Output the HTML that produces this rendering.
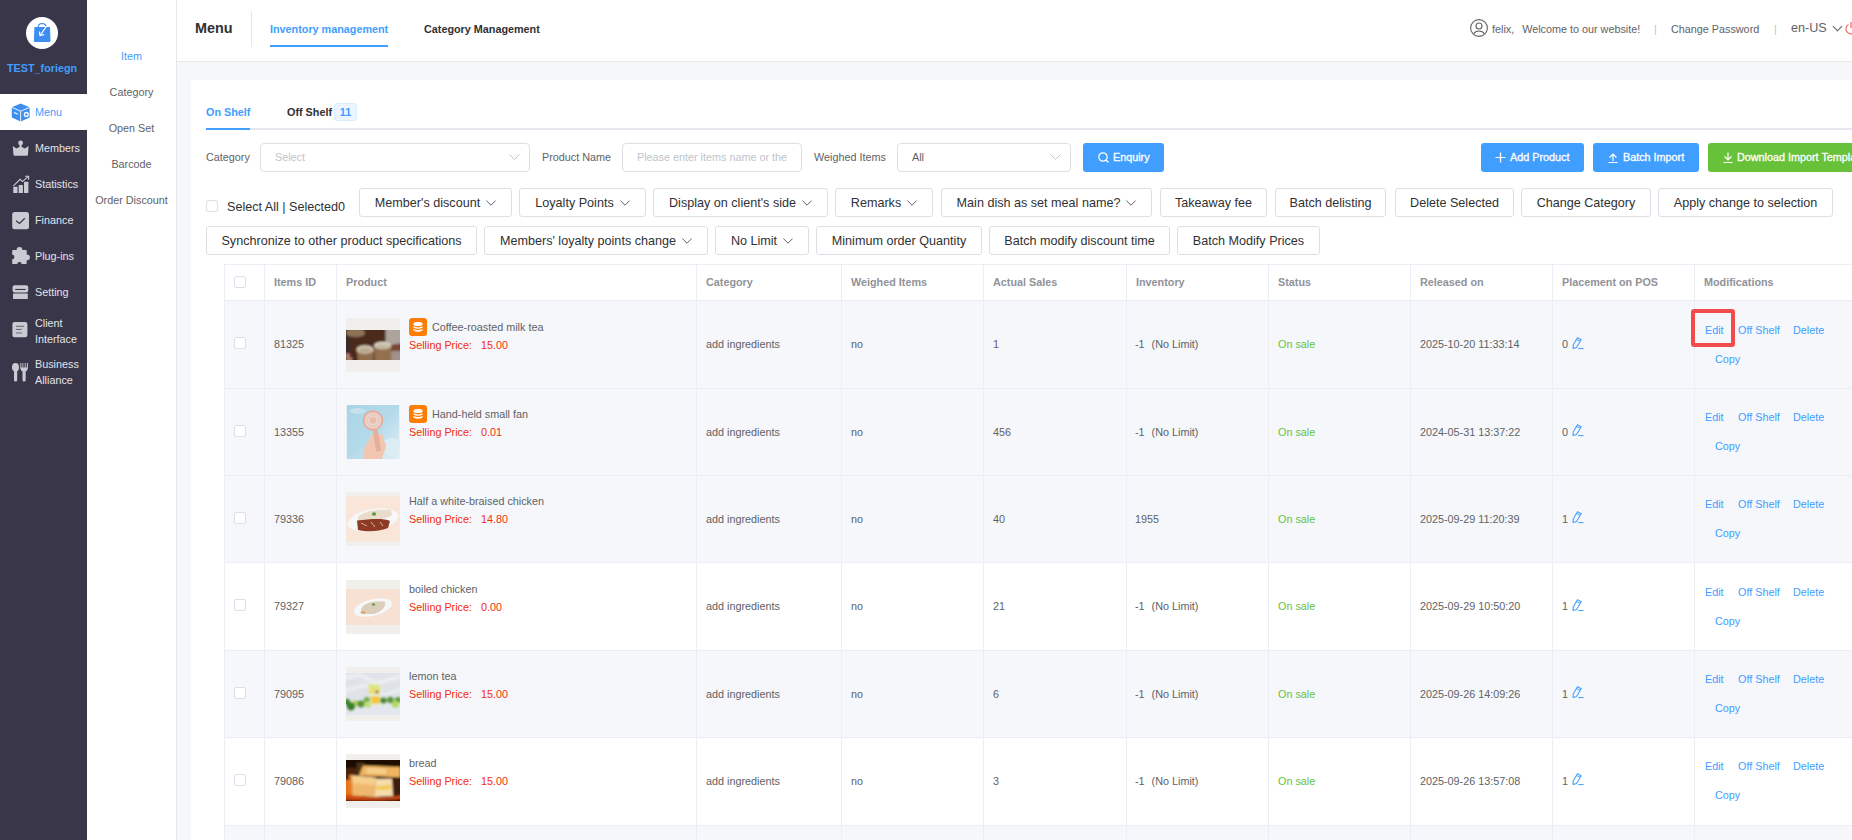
<!DOCTYPE html>
<html><head><meta charset="utf-8">
<style>
*{box-sizing:border-box;margin:0;padding:0}
html,body{width:1852px;height:840px;overflow:hidden}
body{position:relative;background:#f5f7fa;font-family:"Liberation Sans",sans-serif;font-size:10.8px;color:#606266}
.a{position:absolute;white-space:nowrap}
#sb{left:0;top:0;width:87px;height:840px;background:#3a3649}
#sb2{left:87px;top:0;width:90px;height:840px;background:#fff;border-right:1px solid #e6e6e6}
#hd{left:177px;top:0;width:1675px;height:62px;background:#fff;border-bottom:1px solid #e8e8e8}
#card{left:191px;top:80px;width:1700px;height:800px;background:#fff}
.nav{left:0;width:87px;height:36px;color:#e2e3e8}
.nav .t{position:absolute;left:35px;top:0;line-height:36px}
.nav svg{position:absolute;left:11px;top:9px}
.sub{left:87px;width:89px;text-align:center;line-height:20px;color:#606266}
.btn{position:absolute;height:29px;border:1px solid #dcdfe6;border-radius:3px;background:#fff;color:#303133;font-size:12.6px;line-height:28px;text-align:center;white-space:nowrap}
.chv{display:inline-block;margin-left:6px;vertical-align:top;margin-top:11px}
.inp{position:absolute;height:29px;border:1px solid #dcdfe6;border-radius:4px;background:#fff;line-height:27px;padding-left:14px;color:#c0c4cc;white-space:nowrap;overflow:hidden}
.chv2{position:absolute;right:9px;top:10px}
.lbl{position:absolute;line-height:29px;color:#606266;white-space:nowrap}
.pb{position:absolute;top:143px;height:29px;border-radius:3px;color:#fff;line-height:29px;white-space:nowrap;-webkit-text-stroke:0.3px #fff;overflow:hidden}
.hl{left:224px;width:1628px;height:1px;background:#ebeef5}
.vl{top:264px;width:1px;height:576px;background:#ebeef5}
.cb{width:12px;height:12px;border:1px solid #dcdfe6;border-radius:2px;background:#fff}
.td{width:12px;height:12px}
.th{top:264px;line-height:36px;font-weight:bold;color:#909399}
.tc{line-height:87px;height:87px}
.pimg{width:54px;height:54px;background:#f0efed;overflow:hidden}
.pn{line-height:16px}
.pp{line-height:16px;color:#f22e0c}
.coin{width:18px;height:18px;border-radius:3px;background:#ff7d00}
.coin svg{display:block}
.lk{line-height:16px;color:#409eff}
</style></head><body>

<!-- left dark sidebar -->
<div id="sb" class="a">
  <div class="a" style="left:26px;top:17px;width:32px;height:32px;border-radius:50%;background:#fff"></div>
  <svg class="a" style="left:33px;top:23px" width="19" height="20" viewBox="0 0 19 20"><path d="M1.4 4.3 Q1.4 3.9 1.9 3.9 H16.5 Q17 3.9 17 4.3 L17.5 18.1 Q17.5 18.9 16.8 18.9 H1.6 Q0.9 18.9 0.9 18.1 Z" fill="#3d8ef0"/><path d="M5.3 4 Q5.3 0.7 9.2 0.5 Q12.6 0.7 13.2 3.3" fill="none" stroke="#3d8ef0" stroke-width="1.2"/><path d="M13.4 3.4 L7.4 12" fill="none" stroke="#fff" stroke-width="1.2"/><path d="M6.4 8.6 L7 12.5 L11.2 11.6" fill="none" stroke="#fff" stroke-width="1.2"/></svg>
  <div class="a" style="left:7px;top:60px;font-weight:bold;color:#409eff;line-height:16px">TEST_foriegn</div>
</div>
<div class="a" style="left:0;top:94px;width:87px;height:36px;background:#fff"></div>
<div class="a nav" style="top:94px;color:#409eff">
  <svg width="20" height="19" viewBox="0 0 20 19"><path d="M9.6 0.6 L18.6 4.2 L18.6 14.6 L9.6 18.4 L0.8 14.6 L0.8 4.2 Z" fill="#3d8ef0"/><path d="M0.8 4.4 L9.6 8.2 L18.6 4.4 M9.6 8.2 V18.6" fill="none" stroke="#fff" stroke-width="0.9"/><path d="M3 9.6 L6.8 11.2" stroke="#fff" stroke-width="1.1"/><circle cx="15.3" cy="11.4" r="1.9" fill="none" stroke="#fff" stroke-width="1.3"/></svg>
  <span class="t">Menu</span></div>
<div class="a nav" style="top:130px">
  <svg width="19" height="18" viewBox="0 0 19 18"><circle cx="9.6" cy="3.9" r="2.4" fill="#c9cbd3"/><rect x="8.6" y="5" width="2" height="3.5" fill="#c9cbd3"/><path d="M1.8 7 L5.4 9.6 L9.6 7.4 L13.8 9.6 L17.6 7 L16.9 15.8 Q16.7 16.8 15.8 16.8 L3.6 16.8 Q2.7 16.8 2.5 15.8 Z" fill="#c9cbd3"/></svg>
  <span class="t">Members</span></div>
<div class="a nav" style="top:166px">
  <svg width="19" height="19" viewBox="0 0 19 19"><path d="M2.3 10.8 L9.2 4.3 L11.5 6.6 L17.2 1.4" fill="none" stroke="#c9cbd3" stroke-width="1.1"/><path d="M14 1.2 H17.6 V4.8" fill="none" stroke="#c9cbd3" stroke-width="1.1"/><rect x="2.3" y="11.8" width="4.2" height="6.1" rx="0.5" fill="#c9cbd3"/><rect x="7.7" y="9.9" width="4.2" height="8" rx="0.5" fill="#c9cbd3"/><rect x="13" y="6.8" width="4.4" height="11.1" rx="0.5" fill="#c9cbd3"/></svg>
  <span class="t">Statistics</span></div>
<div class="a nav" style="top:202px">
  <svg width="19" height="19" viewBox="0 0 19 19"><rect x="1.2" y="1" width="16.8" height="17.2" rx="2.5" fill="#c9cbd3"/><path d="M5 9.8 L8.5 12.5 L13.8 7.3" fill="none" stroke="#3a3649" stroke-width="1.3"/></svg>
  <span class="t">Finance</span></div>
<div class="a nav" style="top:238px">
  <svg width="20" height="19" viewBox="0 0 20 19"><rect x="1.2" y="3" width="14.5" height="14.1" rx="0.8" fill="#c9cbd3"/><circle cx="8.5" cy="3" r="2.9" fill="#c9cbd3"/><circle cx="16" cy="10.3" r="2.9" fill="#c9cbd3"/><circle cx="1.2" cy="10" r="2.2" fill="#3a3649"/><circle cx="8.5" cy="17.3" r="2.3" fill="#3a3649"/></svg>
  <span class="t">Plug-ins</span></div>
<div class="a nav" style="top:274px">
  <svg width="19" height="18" viewBox="0 0 19 18"><rect x="1.6" y="2.2" width="15.6" height="7.2" rx="2" fill="#c9cbd3"/><rect x="4.2" y="5.9" width="10.4" height="1.1" fill="#3a3649"/><rect x="2" y="10.4" width="14.8" height="5.6" rx="0.5" fill="#c9cbd3"/></svg>
  <span class="t">Setting</span></div>
<div class="a nav" style="top:310px;height:42px">
  <svg width="19" height="17" viewBox="0 0 19 17" style="top:12px"><rect x="1.4" y="0" width="15" height="15.2" rx="2.2" fill="#c9cbd3"/><rect x="4.9" y="3.8" width="8" height="0.9" fill="#5a5668"/><rect x="4.9" y="6.9" width="5.8" height="0.9" fill="#5a5668"/><rect x="4.9" y="10.2" width="6.2" height="1.5" fill="#8a8898"/></svg>
  <span class="t" style="line-height:16px;top:5px">Client<br>Interface</span></div>
<div class="a nav" style="top:352px;height:42px">
  <svg width="19" height="20" viewBox="0 0 19 20" style="top:11px"><ellipse cx="4.5" cy="4.2" rx="3.5" ry="4.2" fill="#c9cbd3"/><rect x="3" y="6" width="3.2" height="12.6" rx="1.6" fill="#c9cbd3"/><path d="M9.8 0 V5.2 Q9.8 7.7 13 7.7 Q16.4 7.7 16.4 5.2 V0" fill="none" stroke="#c9cbd3" stroke-width="1"/><path d="M11.9 0 V6 M14.2 0 V6" stroke="#c9cbd3" stroke-width="0.9"/><path d="M9.8 4.5 H16.4 V6 Q16.4 8.5 13 8.5 Q9.8 8.5 9.8 6 Z" fill="#c9cbd3"/><rect x="11.5" y="7" width="3.2" height="11.5" rx="1.6" fill="#c9cbd3"/></svg>
  <span class="t" style="line-height:16px;top:4px">Business<br>Alliance</span></div>

<!-- second sidebar -->
<div id="sb2" class="a"></div>
<div class="a sub" style="top:46px;color:#409eff">Item</div>
<div class="a sub" style="top:82px">Category</div>
<div class="a sub" style="top:118px">Open Set</div>
<div class="a sub" style="top:154px">Barcode</div>
<div class="a sub" style="top:190px">Order Discount</div>

<!-- header -->
<div id="hd" class="a"></div>
<div class="a" style="left:195px;top:19px;font-size:14.4px;font-weight:bold;color:#303133;line-height:18px">Menu</div>
<div class="a" style="left:251px;top:11px;width:1px;height:36px;background:#e6e6e6"></div>
<div class="a" style="left:270px;top:21px;font-weight:bold;color:#409eff;line-height:16px">Inventory management</div>
<div class="a" style="left:270px;top:45px;width:118px;height:2px;background:#409eff"></div>
<div class="a" style="left:424px;top:21px;font-weight:bold;color:#303133;line-height:16px">Category Management</div>
<svg class="a" style="left:1470px;top:19px" width="18" height="18" viewBox="0 0 18 18"><circle cx="9" cy="9" r="8.4" fill="none" stroke="#606266" stroke-width="1.1"/><circle cx="9" cy="7" r="3" fill="none" stroke="#606266" stroke-width="1.1"/><path d="M3.6 14.8 A6 5 0 0 1 14.4 14.8" fill="none" stroke="#606266" stroke-width="1.1"/></svg>
<div class="a" style="left:1492px;top:21px;color:#606266;line-height:16px">felix,<span style="margin-left:8px">Welcome to our website!</span></div>
<div class="a" style="left:1654px;top:21px;color:#c0c4cc;line-height:16px">|</div>
<div class="a" style="left:1671px;top:21px;color:#606266;line-height:16px">Change Password</div>
<div class="a" style="left:1774px;top:21px;color:#c0c4cc;line-height:16px">|</div>
<div class="a" style="left:1791px;top:19px;color:#606266;font-size:12.6px;line-height:18px">en-US</div>
<div class="a" style="left:1834px;top:23px;width:7px;height:7px;border-right:1px solid #606266;border-bottom:1px solid #606266;transform:rotate(45deg)"></div>
<svg class="a" style="left:1845px;top:21px" width="12" height="14" viewBox="0 0 12 14"><path d="M3.5 3.5 A5 5 0 1 0 8.5 3.5" fill="none" stroke="#f56c6c" stroke-width="1.3"/><path d="M6 1 V7" stroke="#f56c6c" stroke-width="1.3"/></svg>

<!-- card -->
<div id="card" class="a"></div>
<div class="a" style="left:206px;top:104px;font-weight:bold;color:#409eff;line-height:16px">On Shelf</div>
<div class="a" style="left:287px;top:104px;font-weight:bold;color:#303133;line-height:16px">Off Shelf</div>
<div class="a" style="left:334px;top:103px;width:23px;height:18px;background:#ecf5ff;border:1px solid #d9ecff;border-radius:3px;color:#409eff;font-weight:bold;text-align:center;line-height:16px;font-size:10.8px">11</div>
<div class="a" style="left:206px;top:128px;width:1646px;height:2px;background:#e4e7ed"></div>
<div class="a" style="left:206px;top:128px;width:44px;height:2px;background:#409eff"></div>

<div class="lbl" style="left:206px;top:143px">Category</div>
<div class="inp" style="left:260px;top:143px;width:270px">Select<svg class="chv2" width="11" height="6" viewBox="0 0 11 6"><path d="M0.5 0.5 L5.5 5.3 L10.5 0.5" fill="none" stroke="#c0c4cc" stroke-width="1"/></svg></div>
<div class="lbl" style="left:542px;top:143px">Product Name</div>
<div class="inp" style="left:622px;top:143px;width:180px">Please enter items name or the</div>
<div class="lbl" style="left:814px;top:143px">Weighed Items</div>
<div class="inp" style="left:897px;top:143px;width:174px;color:#606266">All<svg class="chv2" width="11" height="6" viewBox="0 0 11 6"><path d="M0.5 0.5 L5.5 5.3 L10.5 0.5" fill="none" stroke="#c0c4cc" stroke-width="1"/></svg></div>
<div class="pb" style="left:1083px;width:81px;background:#409eff"><svg style="position:absolute;left:15px;top:9px" width="11" height="11" viewBox="0 0 11 11"><circle cx="5" cy="5" r="4.2" fill="none" stroke="#fff" stroke-width="1.2"/><path d="M8 8 L10.5 10.5" stroke="#fff" stroke-width="1.2"/></svg><span style="position:absolute;left:30px">Enquiry</span></div>
<div class="pb" style="left:1481px;width:103px;background:#409eff"><svg style="position:absolute;left:14px;top:9px" width="11" height="11" viewBox="0 0 11 11"><path d="M5.5 0.5 V10.5 M0.5 5.5 H10.5" stroke="#fff" stroke-width="1.2"/></svg><span style="position:absolute;left:29px">Add Product</span></div>
<div class="pb" style="left:1593px;width:106px;background:#409eff"><svg style="position:absolute;left:15px;top:9px" width="10" height="11" viewBox="0 0 10 11"><path d="M5 2 V9 M1.5 5.5 L5 2 L8.5 5.5 M0.5 10.5 H9.5" fill="none" stroke="#fff" stroke-width="1.2"/></svg><span style="position:absolute;left:30px">Batch Import</span></div>
<div class="pb" style="left:1708px;width:160px;background:#67c23a"><svg style="position:absolute;left:15px;top:9px" width="10" height="11" viewBox="0 0 10 11"><path d="M5 0.5 V8 M1.5 4.5 L5 8 L8.5 4.5 M0.5 10.5 H9.5" fill="none" stroke="#fff" stroke-width="1.2"/></svg><span style="position:absolute;left:29px">Download Import Template</span></div>

<!-- batch row -->
<div class="a" style="left:206px;top:200px;width:12px;height:12px;border:1px solid #dcdfe6;border-radius:2px;background:#fff"></div>
<div class="a" style="left:227px;top:199px;font-size:12.6px;color:#303133;line-height:16px">Select All | Selected0</div>
<div class="btn" style="left:359px;top:188px;width:153px">Member's discount<svg class="chv" width="10" height="6" viewBox="0 0 10 6"><path d="M0.4 0.6 L5 5.2 L9.6 0.6" fill="none" stroke="#606266" stroke-width="1"/></svg></div>
<div class="btn" style="left:519px;top:188px;width:127px">Loyalty Points<svg class="chv" width="10" height="6" viewBox="0 0 10 6"><path d="M0.4 0.6 L5 5.2 L9.6 0.6" fill="none" stroke="#606266" stroke-width="1"/></svg></div>
<div class="btn" style="left:653px;top:188px;width:175px">Display on client's side<svg class="chv" width="10" height="6" viewBox="0 0 10 6"><path d="M0.4 0.6 L5 5.2 L9.6 0.6" fill="none" stroke="#606266" stroke-width="1"/></svg></div>
<div class="btn" style="left:835px;top:188px;width:98px">Remarks<svg class="chv" width="10" height="6" viewBox="0 0 10 6"><path d="M0.4 0.6 L5 5.2 L9.6 0.6" fill="none" stroke="#606266" stroke-width="1"/></svg></div>
<div class="btn" style="left:941px;top:188px;width:211px">Main dish as set meal name?<svg class="chv" width="10" height="6" viewBox="0 0 10 6"><path d="M0.4 0.6 L5 5.2 L9.6 0.6" fill="none" stroke="#606266" stroke-width="1"/></svg></div>
<div class="btn" style="left:1160px;top:188px;width:107px">Takeaway fee</div>
<div class="btn" style="left:1275px;top:188px;width:111px">Batch delisting</div>
<div class="btn" style="left:1395px;top:188px;width:119px">Delete Selected</div>
<div class="btn" style="left:1521px;top:188px;width:130px">Change Category</div>
<div class="btn" style="left:1658px;top:188px;width:175px">Apply change to selection</div>
<div class="btn" style="left:206px;top:226px;width:271px">Synchronize to other product specifications</div>
<div class="btn" style="left:484px;top:226px;width:224px">Members' loyalty points change<svg class="chv" width="10" height="6" viewBox="0 0 10 6"><path d="M0.4 0.6 L5 5.2 L9.6 0.6" fill="none" stroke="#606266" stroke-width="1"/></svg></div>
<div class="btn" style="left:715px;top:226px;width:94px">No Limit<svg class="chv" width="10" height="6" viewBox="0 0 10 6"><path d="M0.4 0.6 L5 5.2 L9.6 0.6" fill="none" stroke="#606266" stroke-width="1"/></svg></div>
<div class="btn" style="left:816px;top:226px;width:166px">Minimum order Quantity</div>
<div class="btn" style="left:989px;top:226px;width:181px">Batch modify discount time</div>
<div class="btn" style="left:1177px;top:226px;width:143px">Batch Modify Prices</div>

<!-- TABLE -->
<div class="a" style="left:224px;top:264px;width:1628px;height:36px;background:#fff"></div>
<div class="a" style="left:224px;top:300px;width:1628px;height:88px;background:#f5f7fa"></div>
<div class="a" style="left:224px;top:388px;width:1628px;height:87px;background:#f5f7fa"></div>
<div class="a" style="left:224px;top:475px;width:1628px;height:87px;background:#f5f7fa"></div>
<div class="a" style="left:224px;top:562px;width:1628px;height:88px;background:#fff"></div>
<div class="a" style="left:224px;top:650px;width:1628px;height:87px;background:#f5f7fa"></div>
<div class="a" style="left:224px;top:737px;width:1628px;height:88px;background:#fff"></div>
<div class="a" style="left:224px;top:825px;width:1628px;height:20px;background:#f5f7fa"></div>
<div class="a hl" style="top:264px"></div>
<div class="a hl" style="top:300px"></div>
<div class="a hl" style="top:388px"></div>
<div class="a hl" style="top:475px"></div>
<div class="a hl" style="top:562px"></div>
<div class="a hl" style="top:650px"></div>
<div class="a hl" style="top:737px"></div>
<div class="a hl" style="top:825px"></div>
<div class="a vl" style="left:224px"></div>
<div class="a vl" style="left:264px"></div>
<div class="a vl" style="left:336px"></div>
<div class="a vl" style="left:696px"></div>
<div class="a vl" style="left:841px"></div>
<div class="a vl" style="left:983px"></div>
<div class="a vl" style="left:1126px"></div>
<div class="a vl" style="left:1268px"></div>
<div class="a vl" style="left:1410px"></div>
<div class="a vl" style="left:1552px"></div>
<div class="a vl" style="left:1694px"></div>
<div class="a" style="left:234px;top:276px;width:12px;height:12px" ><div class="cb"></div></div>
<div class="a th" style="left:274px">Items ID</div>
<div class="a th" style="left:346px">Product</div>
<div class="a th" style="left:706px">Category</div>
<div class="a th" style="left:851px">Weighed Items</div>
<div class="a th" style="left:993px">Actual Sales</div>
<div class="a th" style="left:1136px">Inventory</div>
<div class="a th" style="left:1278px">Status</div>
<div class="a th" style="left:1420px">Released on</div>
<div class="a th" style="left:1562px">Placement on POS</div>
<div class="a th" style="left:1704px">Modifications</div>
<div class="a td" style="left:234px;top:337px"><div class="cb"></div></div>
<div class="a tc" style="left:274px;top:301px">81325</div>
<div class="a pimg" style="left:346px;top:318px"><svg width="54" height="54" viewBox="0 0 54 54" style="display:block"><defs><filter id="f1" x="-20%" y="-20%" width="140%" height="140%"><feGaussianBlur stdDeviation="0.8"/></filter></defs><rect x="0" y="0" width="54" height="54" fill="#f0efec"/>
<svg x="0" y="12" width="54" height="30" viewBox="0 12 54 30"><g filter="url(#f1)">
<rect x="-3" y="9" width="60" height="36" fill="#4c2a1b"/>
<rect x="-3" y="9" width="7" height="36" fill="#342a25"/>
<ellipse cx="9.5" cy="15" rx="9.5" ry="4.8" fill="#8e7254"/>
<path d="M1 18.5 Q9.5 21 18.5 18.5" stroke="#3a2418" stroke-width="1" fill="none"/>
<rect x="39.5" y="9" width="17" height="19" fill="#ada49e"/>
<path d="M44 27 L57 25 L57 34 L46 34 Z" fill="#784434"/>
<rect x="45" y="33" width="12" height="12" fill="#9d9189"/>
<path d="M10.5 31 L28 31 L27.5 44 L12 44 Z" fill="#8f6d4e"/>
<ellipse cx="19" cy="31.5" rx="8.5" ry="4.2" fill="#d6cab6"/>
<ellipse cx="19" cy="32.3" rx="6.5" ry="2.8" fill="#b9a890"/>
<path d="M28 27 L45.5 27 L45 44 L29 44 Z" fill="#93714f"/>
<ellipse cx="36.5" cy="27.5" rx="8.5" ry="3.8" fill="#e0d6c6"/>
<ellipse cx="36.5" cy="28.3" rx="6.8" ry="2.6" fill="#c4b8a4"/>
<rect x="0" y="35.5" width="3.5" height="3.5" fill="#c98790"/>
<rect x="0" y="39.5" width="6" height="3" fill="#b89070"/>
</g></svg></svg></div>
<div class="a coin" style="left:409px;top:318px"><svg width="18" height="18" viewBox="0 0 18 18"><ellipse cx="9" cy="6" rx="4.7" ry="2.1" fill="#fff"/><path d="M4.3 8.3 Q9 10.6 13.7 8.3 V9.4 Q9 12.2 4.3 9.4 Z" fill="#fff"/><path d="M4.3 10.9 Q9 13.2 13.7 10.9 V12.3 Q9 15.3 4.3 12.3 Z" fill="#fff"/></svg></div>
<div class="a pn" style="left:432px;top:319px">Coffee-roasted milk tea</div>
<div class="a pp" style="left:409px;top:337px">Selling Price:<span style="margin-left:9px">15.00</span></div>
<div class="a tc" style="left:706px;top:301px">add ingredients</div>
<div class="a tc" style="left:851px;top:301px">no</div>
<div class="a tc" style="left:993px;top:301px">1</div>
<div class="a tc" style="left:1135px;top:301px">-1<span style="margin-left:7px">(No Limit)</span></div>
<div class="a tc" style="left:1278px;top:301px;color:#67c23a">On sale</div>
<div class="a tc" style="left:1420px;top:301px">2025-10-20 11:33:14</div>
<div class="a tc" style="left:1562px;top:301px">0</div>
<svg class="a" style="left:1572px;top:337px" width="13" height="13" viewBox="0 0 13 13"><path d="M5.4 0.8 L9.2 2.7 L4.5 10.4 L1.1 11.5 L1.2 7.9 Z M4.7 2.6 L8.4 4.4" fill="none" stroke="#409eff" stroke-width="1.05" stroke-linejoin="round"/><path d="M6.2 11.6 H11.6" stroke="#409eff" stroke-width="1"/></svg>
<div class="a lk" style="left:1705px;top:322px">Edit</div>
<div class="a lk" style="left:1738px;top:322px">Off Shelf</div>
<div class="a lk" style="left:1793px;top:322px">Delete</div>
<div class="a lk" style="left:1715px;top:351px">Copy</div>
<div class="a td" style="left:234px;top:425px"><div class="cb"></div></div>
<div class="a tc" style="left:274px;top:389px">13355</div>
<div class="a pimg" style="left:346px;top:405px"><svg width="54" height="54" viewBox="0 0 54 54" style="display:block"><defs><filter id="f2" x="-20%" y="-20%" width="140%" height="140%"><feGaussianBlur stdDeviation="0.5"/></filter></defs><defs><linearGradient id="g2" x1="0" y1="0" x2="1" y2="1"><stop offset="0" stop-color="#a8d4e6"/><stop offset="0.5" stop-color="#b4daea"/><stop offset="1" stop-color="#e2f0f5"/></linearGradient></defs>
<rect x="0" y="0" width="54" height="54" fill="#e9eff2"/>
<rect x="1" y="0" width="52" height="54" fill="url(#g2)"/>
<g filter="url(#f2)">
<ellipse cx="12" cy="6" rx="8" ry="3" fill="#c4e2ee"/>
<ellipse cx="45" cy="42" rx="9" ry="9" fill="#dcedf4"/>
<path d="M17.5 54 C17 47 18.5 41 22 37 L25.5 30 C27 28 29 28 30 29 L35 29 C37.5 30 38 33 37.5 36 L39.5 38 C40.5 41 39.5 45 38 47 L36 54 Z" fill="#f1c7b2"/>
<path d="M26.5 24.5 L31.5 24 L35.2 45.5 L30.2 46.5 Z" fill="#e8ae9c"/>
<circle cx="27" cy="15.5" r="9.3" fill="#ebd3cb" stroke="#e6ae9c" stroke-width="1.9"/>
<circle cx="27" cy="15.5" r="6" fill="none" stroke="#e8c0b4" stroke-width="0.8"/>
<circle cx="27" cy="15.5" r="3.2" fill="#efbcac"/>
</g></svg></div>
<div class="a coin" style="left:409px;top:405px"><svg width="18" height="18" viewBox="0 0 18 18"><ellipse cx="9" cy="6" rx="4.7" ry="2.1" fill="#fff"/><path d="M4.3 8.3 Q9 10.6 13.7 8.3 V9.4 Q9 12.2 4.3 9.4 Z" fill="#fff"/><path d="M4.3 10.9 Q9 13.2 13.7 10.9 V12.3 Q9 15.3 4.3 12.3 Z" fill="#fff"/></svg></div>
<div class="a pn" style="left:432px;top:406px">Hand-held small fan</div>
<div class="a pp" style="left:409px;top:424px">Selling Price:<span style="margin-left:9px">0.01</span></div>
<div class="a tc" style="left:706px;top:389px">add ingredients</div>
<div class="a tc" style="left:851px;top:389px">no</div>
<div class="a tc" style="left:993px;top:389px">456</div>
<div class="a tc" style="left:1135px;top:389px">-1<span style="margin-left:7px">(No Limit)</span></div>
<div class="a tc" style="left:1278px;top:389px;color:#67c23a">On sale</div>
<div class="a tc" style="left:1420px;top:389px">2024-05-31 13:37:22</div>
<div class="a tc" style="left:1562px;top:389px">0</div>
<svg class="a" style="left:1572px;top:424px" width="13" height="13" viewBox="0 0 13 13"><path d="M5.4 0.8 L9.2 2.7 L4.5 10.4 L1.1 11.5 L1.2 7.9 Z M4.7 2.6 L8.4 4.4" fill="none" stroke="#409eff" stroke-width="1.05" stroke-linejoin="round"/><path d="M6.2 11.6 H11.6" stroke="#409eff" stroke-width="1"/></svg>
<div class="a lk" style="left:1705px;top:409px">Edit</div>
<div class="a lk" style="left:1738px;top:409px">Off Shelf</div>
<div class="a lk" style="left:1793px;top:409px">Delete</div>
<div class="a lk" style="left:1715px;top:438px">Copy</div>
<div class="a td" style="left:234px;top:512px"><div class="cb"></div></div>
<div class="a tc" style="left:274px;top:476px">79336</div>
<div class="a pimg" style="left:346px;top:492px"><svg width="54" height="54" viewBox="0 0 54 54" style="display:block"><defs><filter id="f3" x="-20%" y="-20%" width="140%" height="140%"><feGaussianBlur stdDeviation="0.7"/></filter></defs><rect x="0" y="0" width="54" height="54" fill="#f0efec"/>
<rect x="0" y="4.5" width="54" height="45" fill="#fae6d8"/>
<g filter="url(#f3)">
<ellipse cx="27" cy="28" rx="25.5" ry="11" transform="rotate(-10 27 28)" fill="#f6f7f9"/>
<path d="M12 25 C17 19 32 17 45 18 L46 23 C40 28 24 29 12 29 Z" fill="#e9dccb"/>
<path d="M11 28.5 C24 27 38 26 44 29 L42 36 C32 40 20 40 12 38 Z" fill="#8e3a28"/>
<path d="M15 31 L21 34 M25 30 L29 35 M34 30 L37 34" stroke="#e0d0b8" stroke-width="0.8"/>
<ellipse cx="28" cy="22" rx="2.2" ry="1.8" fill="#5f9a45"/>
</g></svg></div>
<div class="a pn" style="left:409px;top:493px">Half a white-braised chicken</div>
<div class="a pp" style="left:409px;top:511px">Selling Price:<span style="margin-left:9px">14.80</span></div>
<div class="a tc" style="left:706px;top:476px">add ingredients</div>
<div class="a tc" style="left:851px;top:476px">no</div>
<div class="a tc" style="left:993px;top:476px">40</div>
<div class="a tc" style="left:1135px;top:476px">1955</div>
<div class="a tc" style="left:1278px;top:476px;color:#67c23a">On sale</div>
<div class="a tc" style="left:1420px;top:476px">2025-09-29 11:20:39</div>
<div class="a tc" style="left:1562px;top:476px">1</div>
<svg class="a" style="left:1572px;top:511px" width="13" height="13" viewBox="0 0 13 13"><path d="M5.4 0.8 L9.2 2.7 L4.5 10.4 L1.1 11.5 L1.2 7.9 Z M4.7 2.6 L8.4 4.4" fill="none" stroke="#409eff" stroke-width="1.05" stroke-linejoin="round"/><path d="M6.2 11.6 H11.6" stroke="#409eff" stroke-width="1"/></svg>
<div class="a lk" style="left:1705px;top:496px">Edit</div>
<div class="a lk" style="left:1738px;top:496px">Off Shelf</div>
<div class="a lk" style="left:1793px;top:496px">Delete</div>
<div class="a lk" style="left:1715px;top:525px">Copy</div>
<div class="a td" style="left:234px;top:599px"><div class="cb"></div></div>
<div class="a tc" style="left:274px;top:563px">79327</div>
<div class="a pimg" style="left:346px;top:580px"><svg width="54" height="54" viewBox="0 0 54 54" style="display:block"><defs><filter id="f4" x="-20%" y="-20%" width="140%" height="140%"><feGaussianBlur stdDeviation="0.7"/></filter></defs><rect x="0" y="0" width="54" height="54" fill="#f0efec"/>
<rect x="0" y="9" width="54" height="36" fill="#f6e1d3"/>
<g filter="url(#f4)">
<ellipse cx="27" cy="27.5" rx="19.5" ry="8.3" transform="rotate(-14 27 27.5)" fill="#f6f7f9"/>
<path d="M15 31 C15 25 22 22 30 21.5 L39 21.5 C40 26 37 31 28 34 L18 34 Z" fill="#dccebb"/>
<ellipse cx="17" cy="32.5" rx="2.5" ry="1.3" fill="#e0a060"/>
<ellipse cx="27.5" cy="24.5" rx="1.6" ry="1.2" fill="#6a9a50"/>
</g></svg></div>
<div class="a pn" style="left:409px;top:581px">boiled chicken</div>
<div class="a pp" style="left:409px;top:599px">Selling Price:<span style="margin-left:9px">0.00</span></div>
<div class="a tc" style="left:706px;top:563px">add ingredients</div>
<div class="a tc" style="left:851px;top:563px">no</div>
<div class="a tc" style="left:993px;top:563px">21</div>
<div class="a tc" style="left:1135px;top:563px">-1<span style="margin-left:7px">(No Limit)</span></div>
<div class="a tc" style="left:1278px;top:563px;color:#67c23a">On sale</div>
<div class="a tc" style="left:1420px;top:563px">2025-09-29 10:50:20</div>
<div class="a tc" style="left:1562px;top:563px">1</div>
<svg class="a" style="left:1572px;top:599px" width="13" height="13" viewBox="0 0 13 13"><path d="M5.4 0.8 L9.2 2.7 L4.5 10.4 L1.1 11.5 L1.2 7.9 Z M4.7 2.6 L8.4 4.4" fill="none" stroke="#409eff" stroke-width="1.05" stroke-linejoin="round"/><path d="M6.2 11.6 H11.6" stroke="#409eff" stroke-width="1"/></svg>
<div class="a lk" style="left:1705px;top:584px">Edit</div>
<div class="a lk" style="left:1738px;top:584px">Off Shelf</div>
<div class="a lk" style="left:1793px;top:584px">Delete</div>
<div class="a lk" style="left:1715px;top:613px">Copy</div>
<div class="a td" style="left:234px;top:687px"><div class="cb"></div></div>
<div class="a tc" style="left:274px;top:651px">79095</div>
<div class="a pimg" style="left:346px;top:667px"><svg width="54" height="54" viewBox="0 0 54 54" style="display:block"><defs><filter id="f5" x="-20%" y="-20%" width="140%" height="140%"><feGaussianBlur stdDeviation="0.8"/></filter></defs><rect x="0" y="0" width="54" height="54" fill="#f0efec"/>
<svg x="0" y="6" width="54" height="42" viewBox="0 6 54 42"><g filter="url(#f5)">
<rect x="-3" y="3" width="60" height="48" fill="#dfe3e9"/>
<path d="M-3 9 L14 6 L30 14 L54 8 L54 12 L30 18 L14 10 L-3 13 Z" fill="#eceef2"/>
<path d="M-3 22 L20 16 L38 26 L57 20 L57 24 L38 29 L20 20 L-3 26 Z" fill="#e9ecf0"/>
<rect x="-3" y="31" width="60" height="20" fill="#e3e7ed"/>
<path d="M22 16 L35 17 L34 39 L24 39 Z" fill="#e6eedc"/>
<path d="M22.5 17 L34.5 18 L34 27 L23 27 Z" fill="#dfe480"/>
<ellipse cx="25.5" cy="24" rx="2.8" ry="3.2" fill="#e8e070"/>
<path d="M24.5 29 L34 29 L33.5 37 L25.5 37 Z" fill="#f2c83a"/>
<circle cx="31" cy="25" r="1.8" fill="#b07040"/>
<circle cx="1" cy="35" r="3.5" fill="#3f8a24"/>
<circle cx="9.5" cy="36" r="3.2" fill="#b8d262"/>
<circle cx="15" cy="37" r="3.8" fill="#5a9432"/>
<circle cx="20.8" cy="33" r="3.2" fill="#72b03c"/>
<circle cx="5" cy="39.5" r="4.3" fill="#3a8020"/>
<circle cx="21.5" cy="37.5" r="3.3" fill="#bedf74"/>
<circle cx="37.5" cy="33.5" r="3.3" fill="#4a8a2a"/>
<circle cx="44.5" cy="33" r="3.4" fill="#5a9a30"/>
<circle cx="52" cy="33" r="3.3" fill="#5fa032"/>
<circle cx="49.5" cy="37.5" r="3.6" fill="#b4da5c"/>
</g></svg></svg></div>
<div class="a pn" style="left:409px;top:668px">lemon tea</div>
<div class="a pp" style="left:409px;top:686px">Selling Price:<span style="margin-left:9px">15.00</span></div>
<div class="a tc" style="left:706px;top:651px">add ingredients</div>
<div class="a tc" style="left:851px;top:651px">no</div>
<div class="a tc" style="left:993px;top:651px">6</div>
<div class="a tc" style="left:1135px;top:651px">-1<span style="margin-left:7px">(No Limit)</span></div>
<div class="a tc" style="left:1278px;top:651px;color:#67c23a">On sale</div>
<div class="a tc" style="left:1420px;top:651px">2025-09-26 14:09:26</div>
<div class="a tc" style="left:1562px;top:651px">1</div>
<svg class="a" style="left:1572px;top:686px" width="13" height="13" viewBox="0 0 13 13"><path d="M5.4 0.8 L9.2 2.7 L4.5 10.4 L1.1 11.5 L1.2 7.9 Z M4.7 2.6 L8.4 4.4" fill="none" stroke="#409eff" stroke-width="1.05" stroke-linejoin="round"/><path d="M6.2 11.6 H11.6" stroke="#409eff" stroke-width="1"/></svg>
<div class="a lk" style="left:1705px;top:671px">Edit</div>
<div class="a lk" style="left:1738px;top:671px">Off Shelf</div>
<div class="a lk" style="left:1793px;top:671px">Delete</div>
<div class="a lk" style="left:1715px;top:700px">Copy</div>
<div class="a td" style="left:234px;top:774px"><div class="cb"></div></div>
<div class="a tc" style="left:274px;top:738px">79086</div>
<div class="a pimg" style="left:346px;top:754px"><svg width="54" height="54" viewBox="0 0 54 54" style="display:block"><defs><filter id="f6" x="-20%" y="-20%" width="140%" height="140%"><feGaussianBlur stdDeviation="0.8"/></filter></defs><rect x="0" y="0" width="54" height="54" fill="#f0efec"/>
<svg x="0" y="6" width="54" height="41" viewBox="0 6 54 41"><g filter="url(#f6)">
<rect x="-3" y="3" width="60" height="47" fill="#1c0a03"/>
<rect x="-3" y="14" width="18" height="13" fill="#4e2410"/>
<rect x="11" y="9" width="7" height="13" fill="#4a3414"/>
<rect x="46" y="24" width="11" height="22" fill="#3e1e0a"/>
<path d="M-3 37 C10 43 30 46 57 41 L57 50 L-3 50 Z" fill="#d04a0c"/>
<path d="M-3 45.5 C15 47 35 47 57 44.5 L57 50 L-3 50 Z" fill="#3a0c04"/>
<rect x="-3" y="26" width="7" height="15" fill="#ea701a"/>
<path d="M17 11.5 L54 13 L54 23.5 L13 21.5 Z" fill="#eeb460"/>
<path d="M22 14 L40 15 L40 20 L19 19 Z" fill="#f6cf8a"/>
<path d="M3.5 21 L30 23.5 L29.5 43 L4 41 Z" fill="#f6cf8c"/>
<path d="M4 29 L29.5 31 L29.5 43 L4 41 Z" fill="#f0b86e"/>
<path d="M3.5 21 L6 21.5 L6.5 41 L4 41 Z" fill="#e0801e"/>
<path d="M30 25 L46 24.5 L47 42 L29 43 Z" fill="#f8dcac"/>
<path d="M30 32.5 L45 31 L44.5 35 L31 36 Z" fill="#f2c848"/>
</g></svg></svg></div>
<div class="a pn" style="left:409px;top:755px">bread</div>
<div class="a pp" style="left:409px;top:773px">Selling Price:<span style="margin-left:9px">15.00</span></div>
<div class="a tc" style="left:706px;top:738px">add ingredients</div>
<div class="a tc" style="left:851px;top:738px">no</div>
<div class="a tc" style="left:993px;top:738px">3</div>
<div class="a tc" style="left:1135px;top:738px">-1<span style="margin-left:7px">(No Limit)</span></div>
<div class="a tc" style="left:1278px;top:738px;color:#67c23a">On sale</div>
<div class="a tc" style="left:1420px;top:738px">2025-09-26 13:57:08</div>
<div class="a tc" style="left:1562px;top:738px">1</div>
<svg class="a" style="left:1572px;top:773px" width="13" height="13" viewBox="0 0 13 13"><path d="M5.4 0.8 L9.2 2.7 L4.5 10.4 L1.1 11.5 L1.2 7.9 Z M4.7 2.6 L8.4 4.4" fill="none" stroke="#409eff" stroke-width="1.05" stroke-linejoin="round"/><path d="M6.2 11.6 H11.6" stroke="#409eff" stroke-width="1"/></svg>
<div class="a lk" style="left:1705px;top:758px">Edit</div>
<div class="a lk" style="left:1738px;top:758px">Off Shelf</div>
<div class="a lk" style="left:1793px;top:758px">Delete</div>
<div class="a lk" style="left:1715px;top:787px">Copy</div>
<div class="a" style="left:1691px;top:309px;width:44px;height:38px;border:4px solid #f24b4b;border-radius:3px"></div>
</body></html>
